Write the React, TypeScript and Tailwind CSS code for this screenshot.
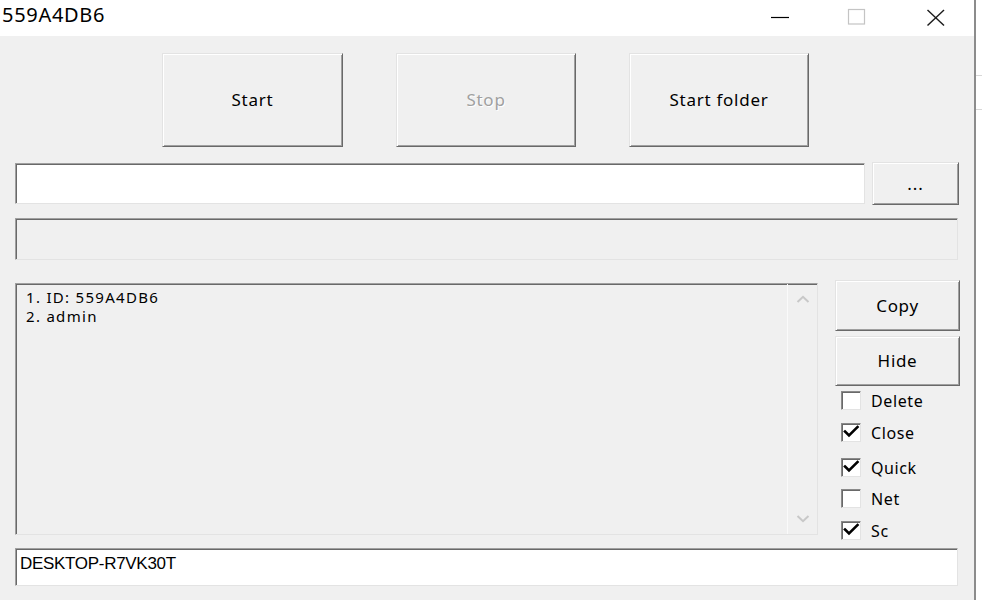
import React from "react";

const raised =
  "bg-[#f0f0f0] border border-t-[#e3e3e3] border-l-[#e3e3e3] border-b-[#696969] border-r-[#696969] shadow-[inset_1px_1px_0_#ffffff,inset_-1px_-1px_0_#a0a0a0] flex items-center justify-center";
const sunken =
  "border border-t-[#a0a0a0] border-l-[#a0a0a0] border-b-[#e3e3e3] border-r-[#e3e3e3] shadow-[inset_1px_1px_0_#696969]";

const font = { fontFamily: '"Noto Sans", "Open Sans", sans-serif' };

function Check({ label, checked, mt }: { label: string; checked: boolean; mt: string }) {
  return (
    <div className={`flex items-center ${mt} ml-[6px] h-[19px]`}>
      <div className={`w-[20px] h-[19px] bg-white border border-t-[#8a8a8a] border-l-[#8a8a8a] border-b-[#e3e3e3] border-r-[#e3e3e3] shadow-[inset_1px_1px_0_#696969] relative`}>
        {checked && (
          <svg className="absolute left-[-1px] top-[-1px]" width="20" height="19" viewBox="0 0 20 19">
            <polyline points="4,8.5 8,12.5 16.5,4" fill="none" stroke="#000" strokeWidth="2.6" strokeLinecap="square" />
          </svg>
        )}
      </div>
      <span className="ml-[10px] text-[16px] tracking-[0.6px] text-black leading-none">{label}</span>
    </div>
  );
}

export default function App() {
  return (
    <div className="w-[982px] h-[600px] flex overflow-hidden bg-white" style={font}>
      <div className="w-[976px] h-[600px] flex flex-col border-r-2 border-[#8c8c8c] shrink-0">
        {/* Title bar */}
        <div className="h-[36px] bg-white flex items-start shrink-0">
          <div className="pl-[2px] pt-[1px] text-[20px] leading-[28px] tracking-[0.7px] text-black">559A4DB6</div>
          <div className="ml-auto flex items-start">
            <svg width="20" height="36" className="mr-[57px]" viewBox="0 0 20 36">
              <line x1="1" y1="17.5" x2="19" y2="17.5" stroke="#000" strokeWidth="1.2" />
            </svg>
            <svg width="20" height="36" className="mr-[59px]" viewBox="0 0 20 36">
              <rect x="1.5" y="9.5" width="16" height="14.5" fill="none" stroke="#c4c4c4" strokeWidth="1.2" />
            </svg>
            <svg width="20" height="36" className="mr-[28px]" viewBox="0 0 20 36">
              <line x1="1.5" y1="10" x2="18" y2="25.5" stroke="#1a1a1a" strokeWidth="1.4" />
              <line x1="18" y1="10" x2="1.5" y2="25.5" stroke="#1a1a1a" strokeWidth="1.4" />
            </svg>
          </div>
        </div>

        {/* Body */}
        <div className="flex-1 bg-[#f0f0f0] flex flex-col">
          {/* Buttons row */}
          <div className="flex mt-[17px] pl-[162px] gap-[53px]">
            <div className={`w-[181px] h-[94px] ${raised} text-[17px] tracking-[0.75px] text-black`}>Start</div>
            <div className={`w-[180px] h-[94px] ${raised} text-[17px] tracking-[0.75px] text-[#a0a0a0] [text-shadow:1px_1px_0_#ffffff]`}>Stop</div>
            <div className={`w-[180px] h-[94px] ${raised} text-[17px] tracking-[0.75px] text-black`}>Start folder</div>
          </div>

          {/* Path row */}
          <div className="flex items-center mt-[15px] pl-[15px] h-[43px]">
            <div className={`w-[850px] h-[41px] bg-white ${sunken}`} />
            <div className={`ml-[7px] w-[87px] h-[43px] ${raised} text-[17px] tracking-[1px] text-black`}>...</div>
          </div>

          {/* Gray field */}
          <div className={`ml-[15px] mt-[13px] w-[943px] h-[42px] bg-[#f0f0f0] ${sunken}`} />

          {/* Middle */}
          <div className="flex items-start mt-[20px] pl-[15px] h-[255px]">
            <div className={`mt-[3px] w-[803px] h-[252px] bg-[#f0f0f0] ${sunken} flex`}>
              <div className="flex-1 pl-[10px] pt-[4px] text-[15px] leading-[19px] tracking-[1.3px] text-black">
                <div>1. ID: 559A4DB6</div>
                <div>2. admin</div>
              </div>
              <div className="w-[30px] border-l border-[#fafafa] flex flex-col items-center justify-between py-[11px]">
                <svg width="14" height="8" viewBox="0 0 14 8">
                  <polyline points="1.5,7 7,1.8 12.5,7" fill="none" stroke="#c8c8c8" strokeWidth="2" />
                </svg>
                <svg width="14" height="8" viewBox="0 0 14 8">
                  <polyline points="1.5,1 7,6.2 12.5,1" fill="none" stroke="#c8c8c8" strokeWidth="2" />
                </svg>
              </div>
            </div>
            <div className="ml-[17px] flex flex-col">
              <div className={`w-[125px] h-[51px] ${raised} text-[17px] tracking-[0.7px] text-black`}>Copy</div>
              <div className={`mt-[5px] w-[125px] h-[50px] ${raised} text-[17px] tracking-[0.7px] text-black`}>Hide</div>
              <Check label="Delete" checked={false} mt="mt-[5px]" />
              <Check label="Close" checked={true} mt="mt-[13px]" />
              <Check label="Quick" checked={true} mt="mt-[16px]" />
              <Check label="Net" checked={false} mt="mt-[12px]" />
              <Check label="Sc" checked={true} mt="mt-[13px]" />
            </div>
          </div>

          {/* Bottom input */}
          <div
            className={`ml-[15px] mt-[13px] w-[943px] h-[38px] bg-white ${sunken} pl-[4px] pt-[5px] text-[17px] leading-[20px] tracking-[-0.3px] text-black`}
            style={{ fontFamily: '"Liberation Sans", Arial, sans-serif' }}
          >
            DESKTOP-R7VK30T
          </div>
        </div>
      </div>
      <div className="flex-1 bg-white flex flex-col">
        <div className="h-[75px]" />
        <div className="h-px bg-[#d8d8d8]" />
        <div className="h-[33px]" />
        <div className="h-px bg-[#d8d8d8]" />
      </div>
    </div>
  );
}
